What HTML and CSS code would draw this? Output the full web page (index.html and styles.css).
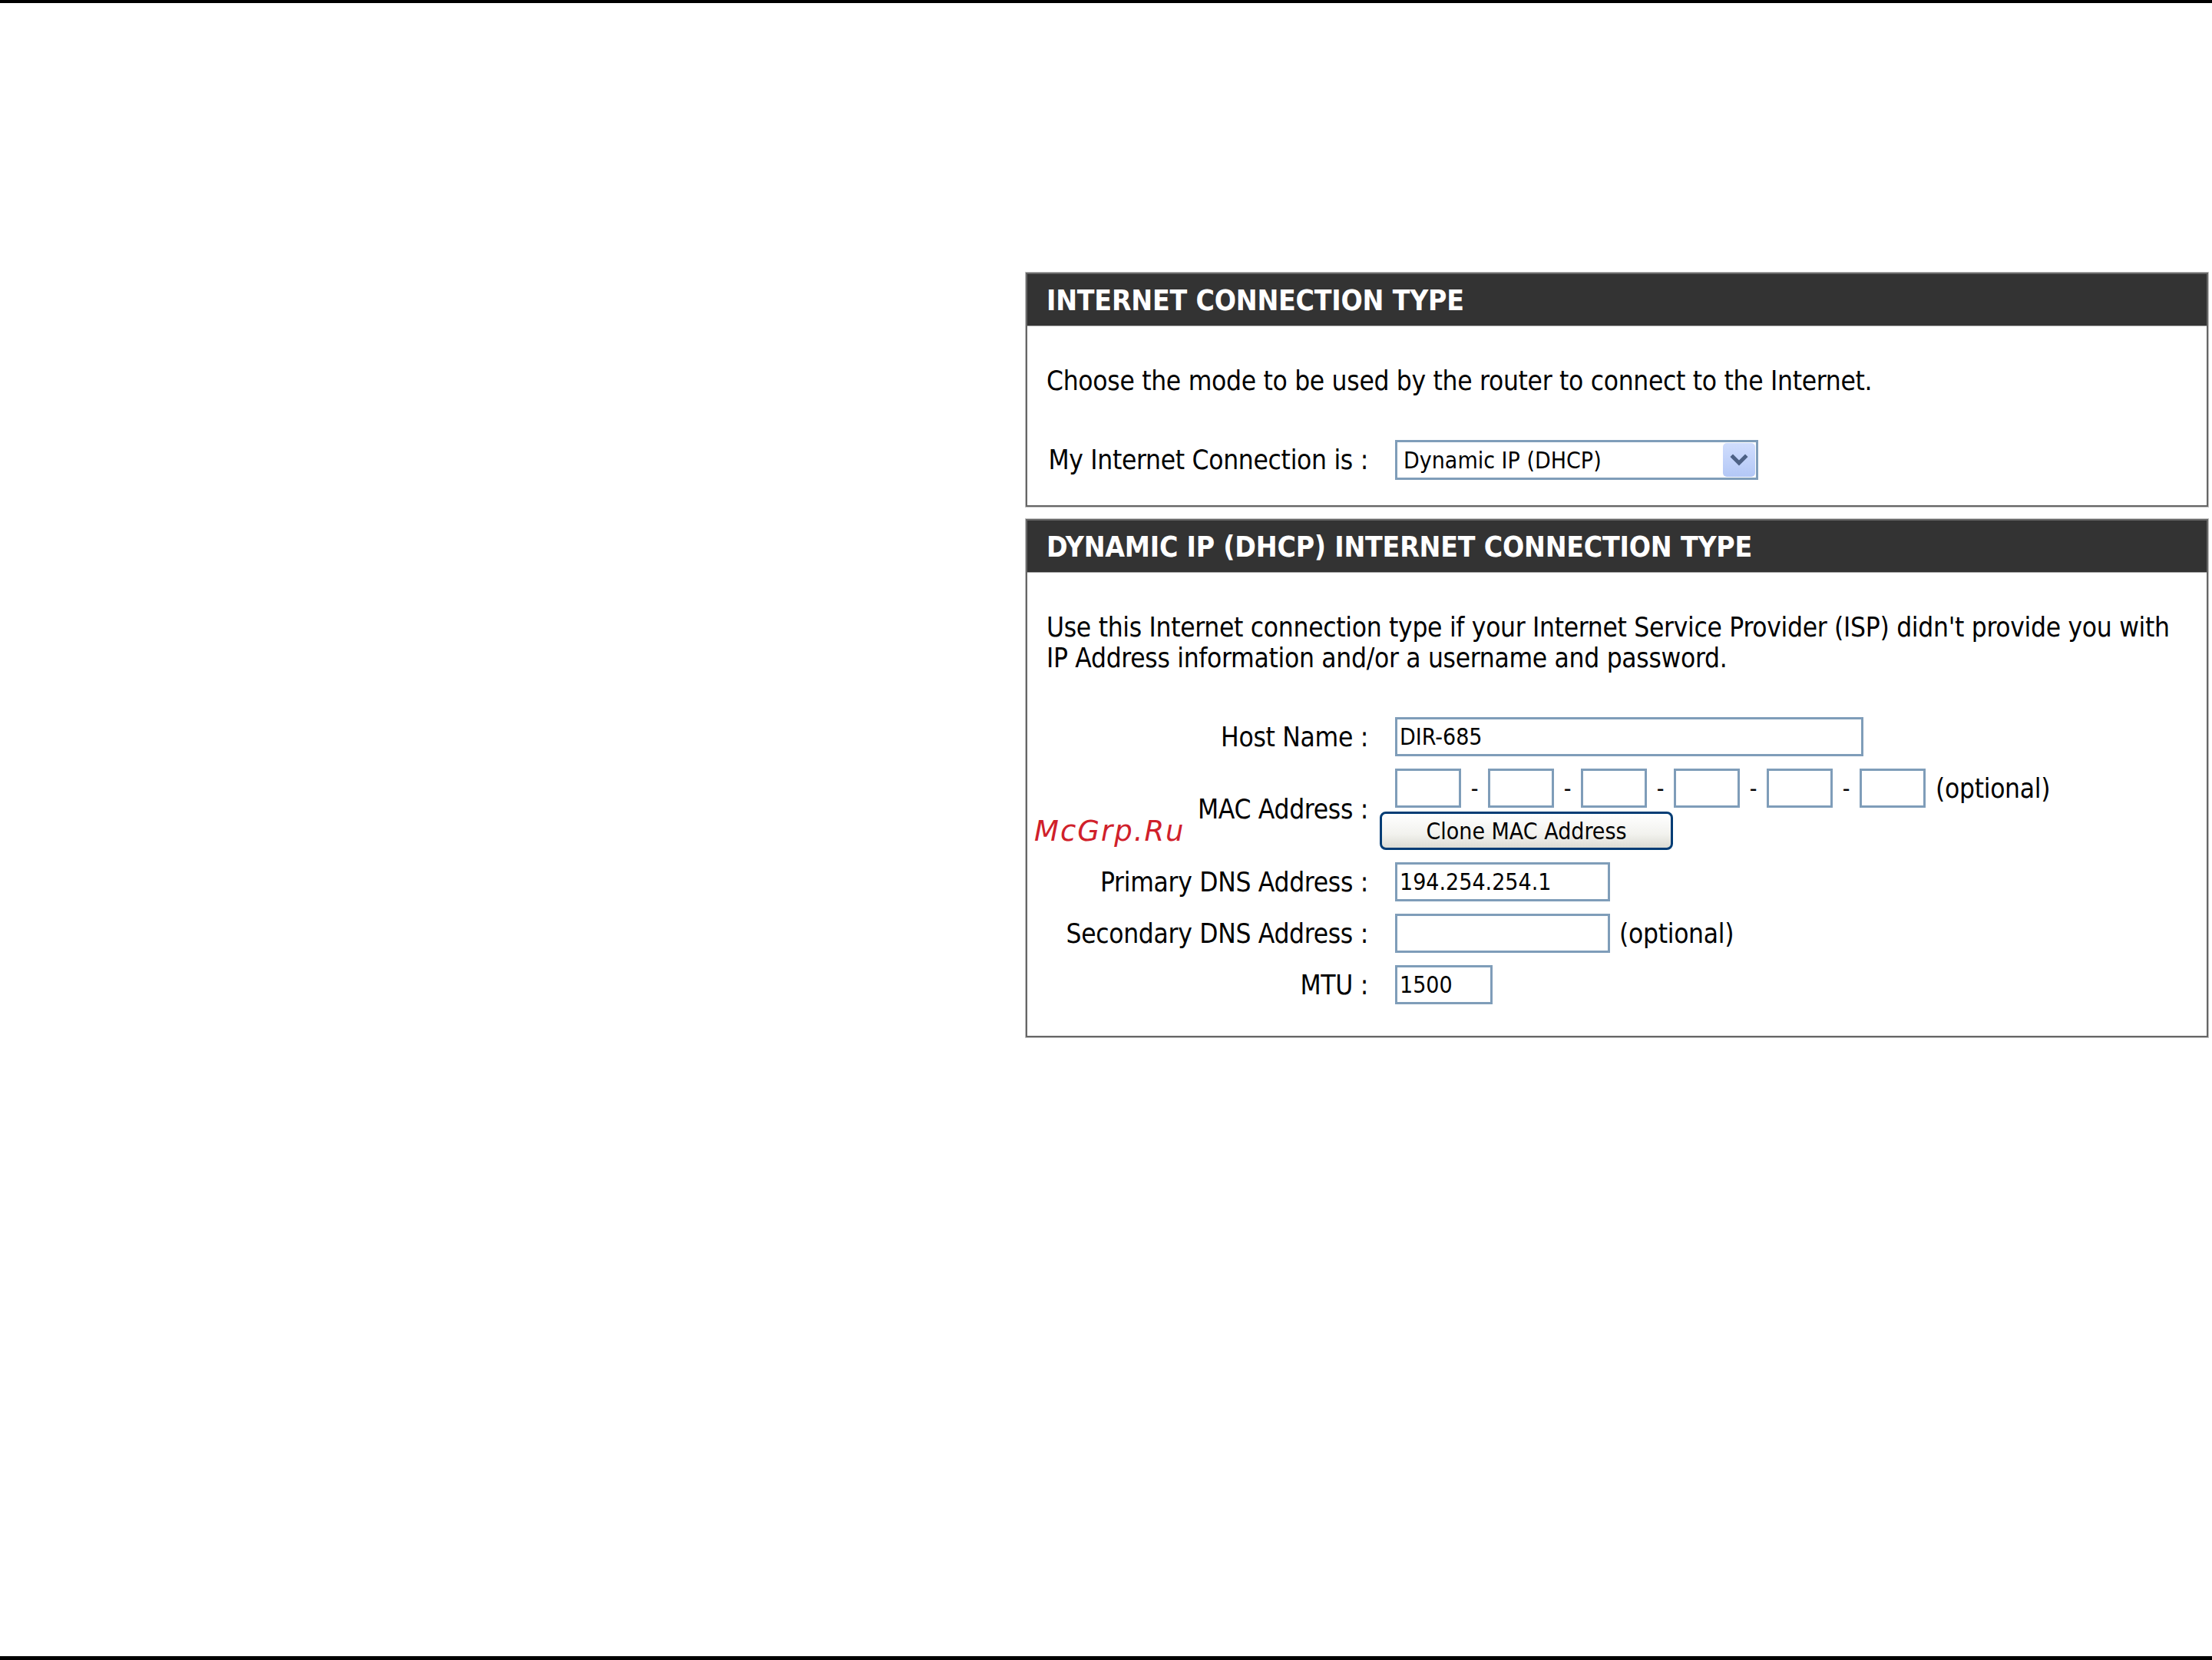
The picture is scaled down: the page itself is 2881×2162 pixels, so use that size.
FILE: index.html
```html
<!DOCTYPE html>
<html lang="en">
<head>
  <meta charset="UTF-8" />
  <title>Internet Connection Type</title>
  <link rel="stylesheet" href="styles.css">
</head>
<body>
  <div class="page">
    <section class="panel">
      <h2>INTERNET CONNECTION TYPE</h2>
      <div class="panel-body">
        <p>Choose the mode to be used by the router to connect to the Internet.</p>
        <div class="form">
          <span class="label">My Internet Connection is :</span>
          <div class="select">
            <span>Dynamic IP (DHCP)</span>
            <span class="select-btn">
              <svg width="42" height="44" viewBox="0 0 42 44">
                <path d="M13 18 L21 26 L29 18" fill="none" stroke="#4d6185" stroke-width="5" stroke-linecap="square"/>
              </svg>
            </span>
          </div>
        </div>
      </div>
    </section>

    <section class="panel">
      <h2>DYNAMIC IP (DHCP) INTERNET CONNECTION TYPE</h2>
      <div class="panel-body bottom">
        <p>Use this Internet connection type if your Internet Service Provider (ISP) didn't provide you with<br>IP Address information and/or a username and password.</p>
        <div class="form">
          <span class="label">Host Name :</span>
          <div><input class="field host" type="text" value="DIR-685"></div>

          <span class="label">MAC Address :</span>
          <div class="mac">
            <div class="mac-boxes">
              <input class="field mac-box" type="text"><span class="dash">-</span>
              <input class="field mac-box" type="text"><span class="dash">-</span>
              <input class="field mac-box" type="text"><span class="dash">-</span>
              <input class="field mac-box" type="text"><span class="dash">-</span>
              <input class="field mac-box" type="text"><span class="dash">-</span>
              <input class="field mac-box" type="text">
              <span class="optional">(optional)</span>
            </div>
            <button class="btn">Clone MAC Address</button>
          </div>

          <span class="label">Primary DNS Address :</span>
          <div><input class="field dns" type="text" value="194.254.254.1"></div>

          <span class="label">Secondary DNS Address :</span>
          <div class="inline"><input class="field dns" type="text"><span class="optional small">(optional)</span></div>

          <span class="label">MTU :</span>
          <div><input class="field mtu" type="text" value="1500"></div>
        </div>
      </div>
      <span class="watermark">McGrp.Ru</span>
    </section>
  </div>
</body>
</html>
```

FILE: styles.css
```css
body {
  margin: 0;
  font-family: "DejaVu Sans Condensed", "DejaVu Sans", sans-serif;
  font-stretch: condensed;
  font-size: 35px;
  letter-spacing: -0.3px;
  color: #000;
  background: #fff;
}
.page {
  box-sizing: border-box;
  height: 100vh;
  border-top: 4px solid #000;
  border-bottom: 5px solid #000;
  padding: 351px 0 0 1336px;
}
.panel {
  position: relative;
  width: 1540px;
  box-sizing: border-box;
  border: 2px solid #666;
  box-shadow: 0 0 0 1px #c4c4c4;
  margin-bottom: 16px;
}
.panel h2 {
  margin: 0;
  height: 64px;
  padding: 3px 0 0 25px;
  line-height: 64px;
  background: #333;
  color: #fff;
  font-size: 37px;
  font-weight: bold;
  letter-spacing: -0.2px;
  border-bottom: 1px solid #aaa;
  white-space: nowrap;
}
.panel-body {
  padding: 51px 25px 33px;
}
.panel-body.bottom {
  padding-bottom: 41px;
}
.panel-body p {
  margin: 0 0 57px;
  line-height: 40px;
  white-space: nowrap;
}
.form {
  display: grid;
  grid-template-columns: 419px auto;
  column-gap: 35px;
  row-gap: 16px;
  align-items: center;
}
.label {
  text-align: right;
  white-space: nowrap;
}
.select {
  box-sizing: border-box;
  width: 473px;
  height: 52px;
  border: 3px solid #7f9db9;
  display: flex;
  align-items: center;
  justify-content: space-between;
  padding-left: 8px;
  font-size: 30px;
  letter-spacing: 0;
}
.select-btn {
  width: 42px;
  height: 44px;
  margin-right: 1px;
  border-radius: 5px;
  background: linear-gradient(#d0ddfd, #b3c7f6);
  display: flex;
}
.field {
  box-sizing: border-box;
  height: 51px;
  border: 3px solid #7f9db9;
  padding: 0 3px;
  margin: 0;
  font: inherit;
  font-size: 30px;
  letter-spacing: 0;
  color: #000;
  background: #fff;
  outline: none;
}
.host {
  width: 610px;
}
.dns {
  width: 280px;
}
.mtu {
  width: 127px;
}
.mac-boxes, .inline {
  display: flex;
  align-items: center;
}
.mac-box {
  width: 86px;
}
.dash {
  width: 35px;
  text-align: center;
  font-size: 30px;
}
.optional {
  margin-left: 13px;
}
.optional.small {
  margin-left: 12px;
}
.btn {
  display: block;
  box-sizing: border-box;
  width: 382px;
  height: 50px;
  margin: 5px 0 0 -20px;
  border: 3px solid #003c74;
  border-radius: 8px;
  background: linear-gradient(#ffffff, #f2f2ee 60%, #dcdcd4);
  font: inherit;
  font-size: 30px;
  letter-spacing: 0;
  color: #000;
  padding: 0;
}
.watermark {
  position: absolute;
  left: 9px;
  top: 386px;
  line-height: 1;
  font-family: "DejaVu Sans", sans-serif;
  font-stretch: normal;
  font-style: italic;
  font-size: 37px;
  letter-spacing: 2px;
  color: #d0202a;
}
```
